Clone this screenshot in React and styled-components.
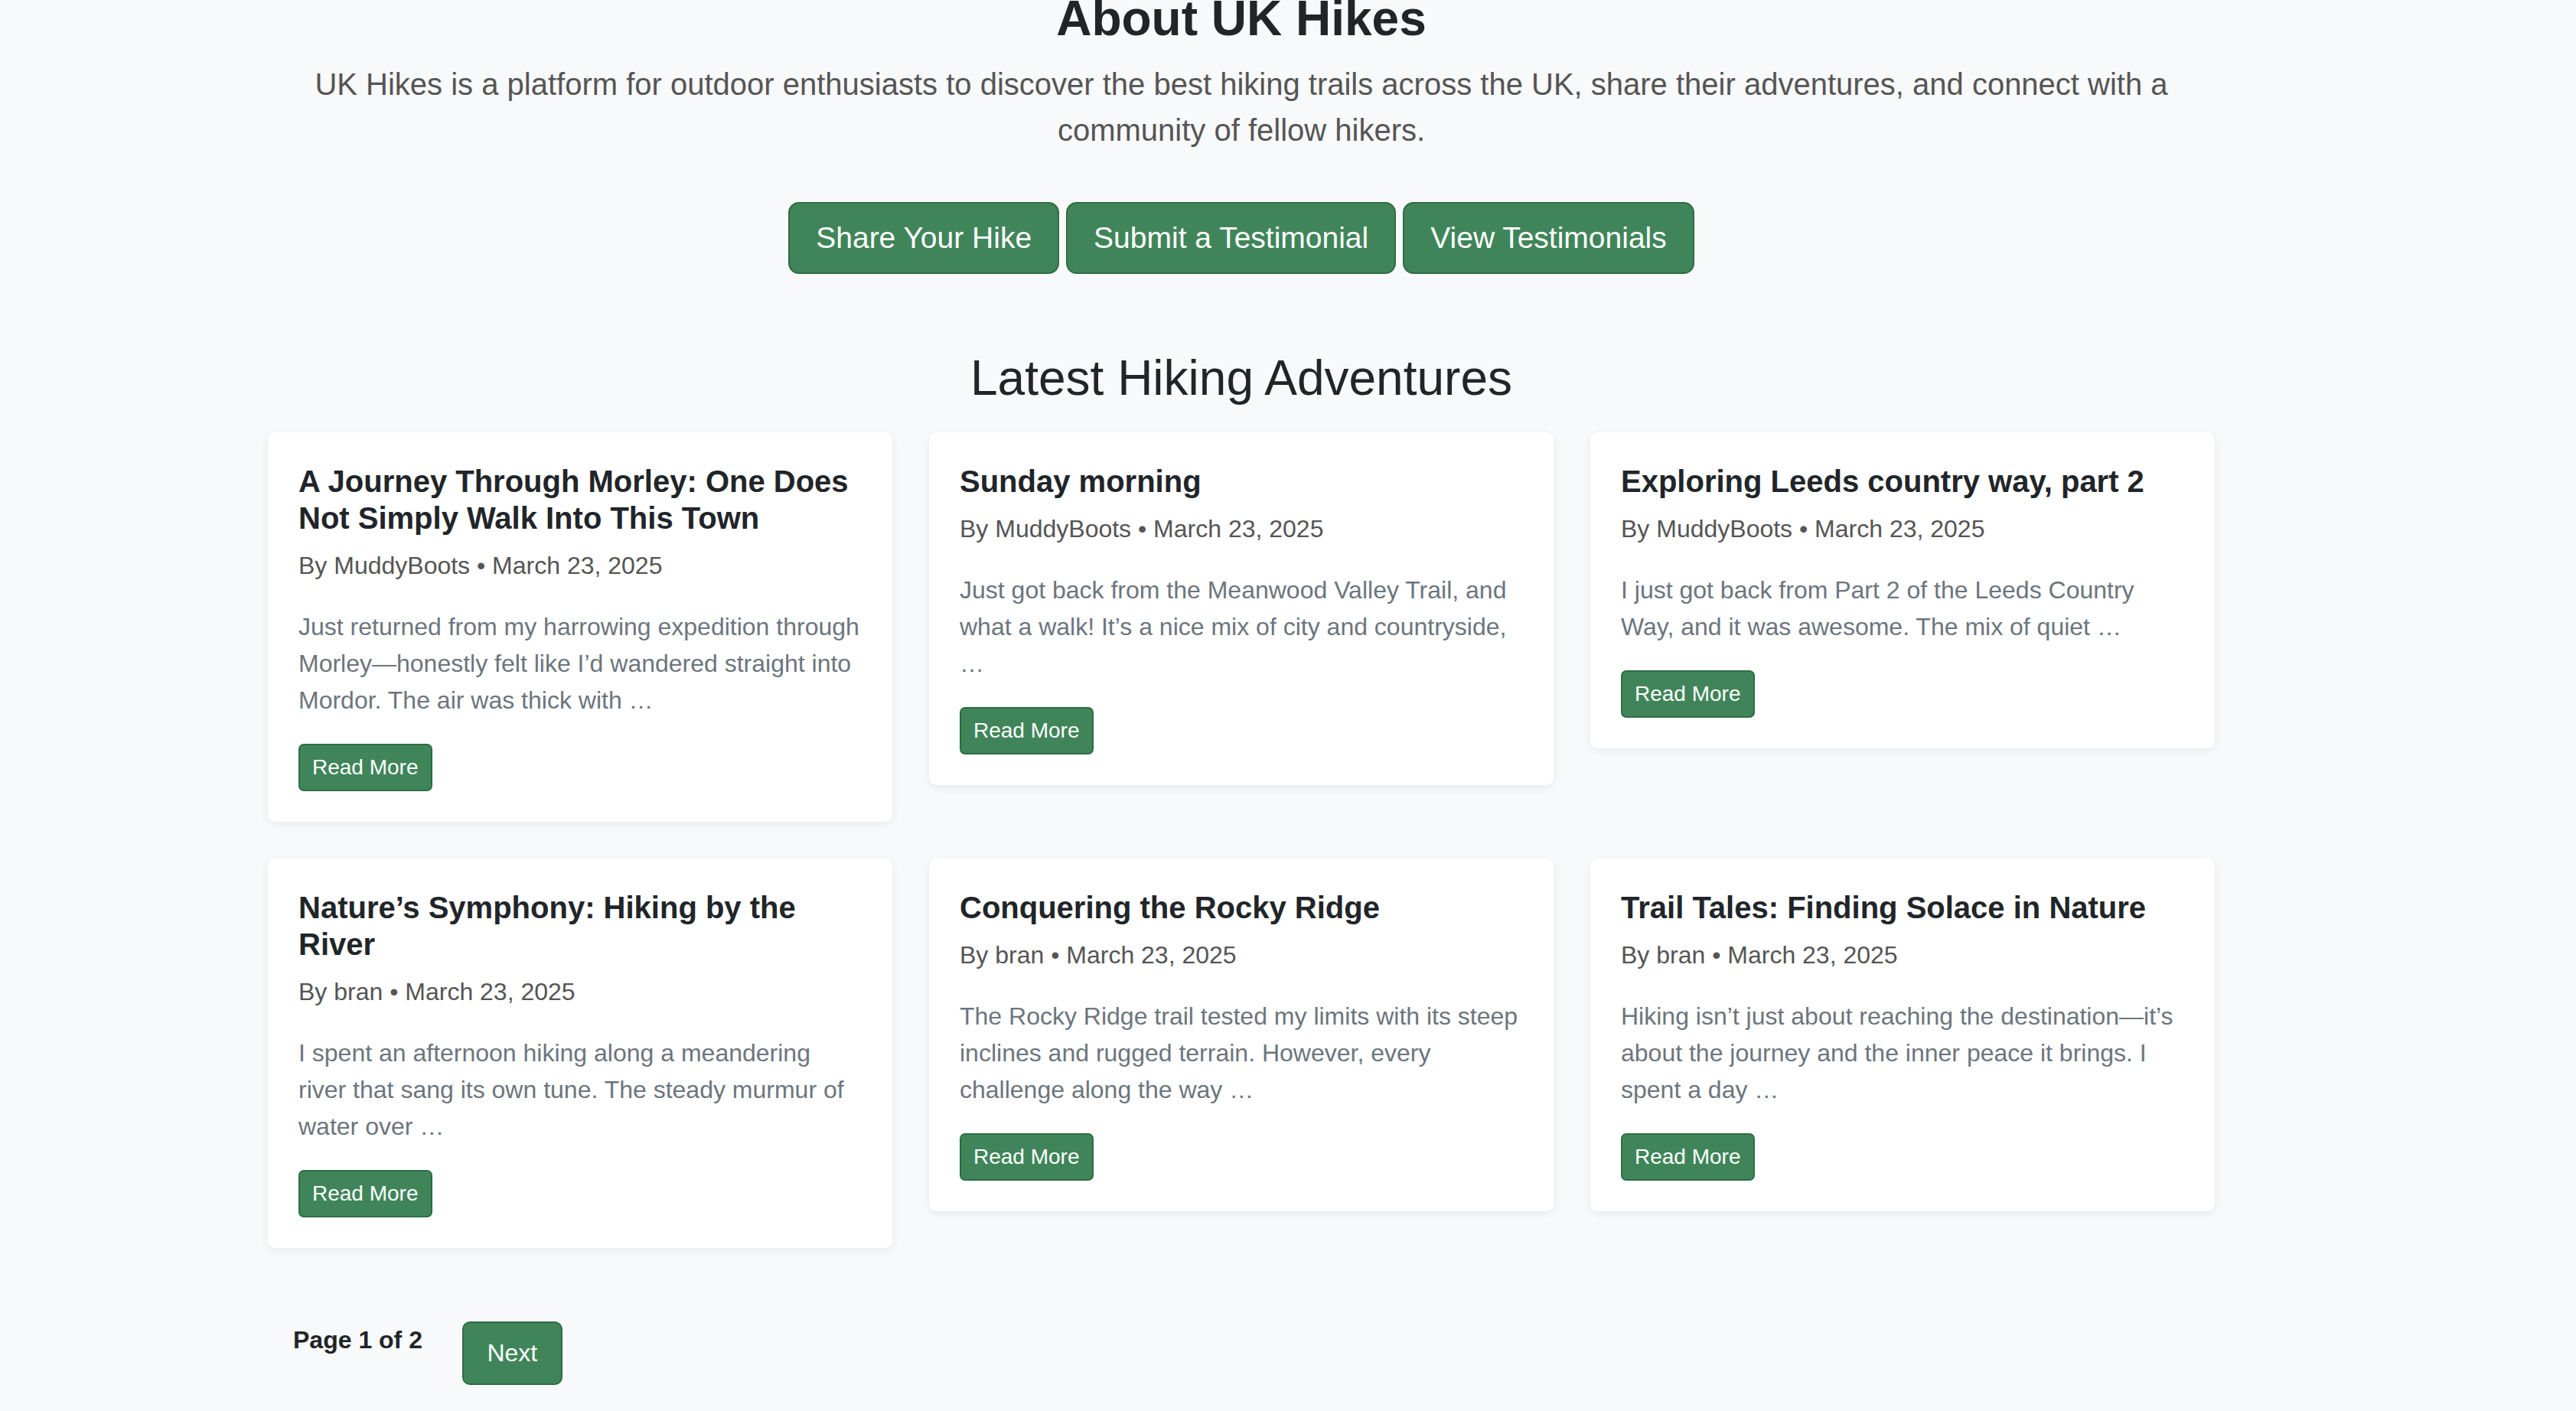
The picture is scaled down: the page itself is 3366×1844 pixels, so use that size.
import React from 'react';
import styled, { createGlobalStyle } from 'styled-components';

const GlobalStyle = createGlobalStyle`
  * { box-sizing: border-box; }
  html, body {
    margin: 0;
    padding: 0;
    background: #f8f9fa;
  }
  body {
    font-family: "Liberation Sans", Arial, Helvetica, sans-serif;
    color: #212529;
    overflow: hidden;
    min-height: 1844px;
  }
`;

const Page = styled.main`
  width: 2544px;
  margin: -14px 0 0 350px;
`;

const Hero = styled.section`
  display: flex;
  flex-direction: column;
  align-items: center;
  text-align: center;
`;

const PageTitle = styled.h1`
  margin: 0 0 17px;
  font-size: 64px;
  line-height: 76.8px;
  font-weight: 700;
  color: #212529;
`;

const Lead = styled.p`
  margin: 0;
  font-size: 40px;
  line-height: 60px;
  color: #555;
`;

const ActionRow = styled.div`
  display: flex;
  justify-content: center;
  gap: 9px;
  margin-top: 64px;
`;

const sizes = {
  lg: { font: 39, lh: 58, pad: '16px 34px', radius: 14 },
  md: { font: 32, lh: 48, pad: '15.5px 30.5px', radius: 10 },
  sm: { font: 28, lh: 42, pad: '8px 16px', radius: 7 },
};

const Button = styled.button`
  font-family: inherit;
  font-size: ${(p) => sizes[p.$size].font}px;
  line-height: ${(p) => sizes[p.$size].lh}px;
  padding: ${(p) => sizes[p.$size].pad};
  border-radius: ${(p) => sizes[p.$size].radius}px;
  background: #40855a;
  border: 2px solid #2f6c46;
  color: #fff;
  cursor: pointer;
  white-space: nowrap;
  align-self: flex-start;
`;

const SectionHeading = styled.h2`
  margin: 98px 0 32px;
  font-size: 64px;
  line-height: 76.8px;
  font-weight: 400;
  text-align: center;
  color: #212529;
`;

const Grid = styled.div`
  display: grid;
  grid-template-columns: repeat(3, 816px);
  gap: 48px;
  align-items: start;
`;

const Card = styled.article`
  background: #fff;
  border-radius: 10px;
  padding: 40px;
  box-shadow: 0 3px 12px rgba(0, 0, 0, 0.07);
  display: flex;
  flex-direction: column;
`;

const CardTitle = styled.h3`
  margin: 0 0 14px;
  font-size: 40px;
  line-height: 48px;
  font-weight: 700;
  color: #212529;
`;

const Meta = styled.p`
  margin: 0 0 32px;
  font-size: 32px;
  line-height: 48px;
  color: #555;
`;

const Excerpt = styled.p`
  margin: 0 0 33px;
  font-size: 32px;
  line-height: 48px;
  color: #6c757d;
`;

const Pagination = styled.nav`
  display: flex;
  align-items: flex-start;
  gap: 52px;
  margin-top: 96px;
  padding-left: 33px;
`;

const PageLabel = styled.span`
  font-size: 32px;
  line-height: 48px;
  font-weight: 700;
  color: #212529;
`;

const posts = [
  {
    title: 'A Journey Through Morley: One Does Not Simply Walk Into This Town',
    author: 'MuddyBoots',
    excerpt:
      'Just returned from my harrowing expedition through Morley\u2014honestly felt like I\u2019d wandered straight into Mordor. The air was thick with \u2026',
  },
  {
    title: 'Sunday morning',
    author: 'MuddyBoots',
    excerpt:
      'Just got back from the Meanwood Valley Trail, and what a walk! It\u2019s a nice mix of city and countryside, \u2026',
  },
  {
    title: 'Exploring Leeds country way, part 2',
    author: 'MuddyBoots',
    excerpt:
      'I just got back from Part 2 of the Leeds Country Way, and it was awesome. The mix of quiet \u2026',
  },
  {
    title: 'Nature\u2019s Symphony: Hiking by the River',
    author: 'bran',
    excerpt:
      'I spent an afternoon hiking along a meandering river that sang its own tune. The steady murmur of water over \u2026',
  },
  {
    title: 'Conquering the Rocky Ridge',
    author: 'bran',
    excerpt:
      'The Rocky Ridge trail tested my limits with its steep inclines and rugged terrain. However, every challenge along the way \u2026',
  },
  {
    title: 'Trail Tales: Finding Solace in Nature',
    author: 'bran',
    excerpt:
      'Hiking isn\u2019t just about reaching the destination\u2014it\u2019s about the journey and the inner peace it brings. I spent a day \u2026',
  },
];

export default function App() {
  return (
    <>
      <GlobalStyle />
      <Page>
        <Hero>
          <PageTitle>About UK Hikes</PageTitle>
          <Lead>
            UK Hikes is a platform for outdoor enthusiasts to discover the best hiking trails across the UK,
            share their adventures, and connect with a community of fellow hikers.
          </Lead>
          <ActionRow>
            <Button $size="lg">Share Your Hike</Button>
            <Button $size="lg">Submit a Testimonial</Button>
            <Button $size="lg">View Testimonials</Button>
          </ActionRow>
        </Hero>

        <SectionHeading>Latest Hiking Adventures</SectionHeading>

        <Grid>
          {posts.map((p) => (
            <Card key={p.title}>
              <CardTitle>{p.title}</CardTitle>
              <Meta>
                By {p.author} {'\u2022'} March 23, 2025
              </Meta>
              <Excerpt>{p.excerpt}</Excerpt>
              <Button $size="sm">Read More</Button>
            </Card>
          ))}
        </Grid>

        <Pagination>
          <PageLabel>Page 1 of 2</PageLabel>
          <Button $size="md">Next</Button>
        </Pagination>
      </Page>
    </>
  );
}
